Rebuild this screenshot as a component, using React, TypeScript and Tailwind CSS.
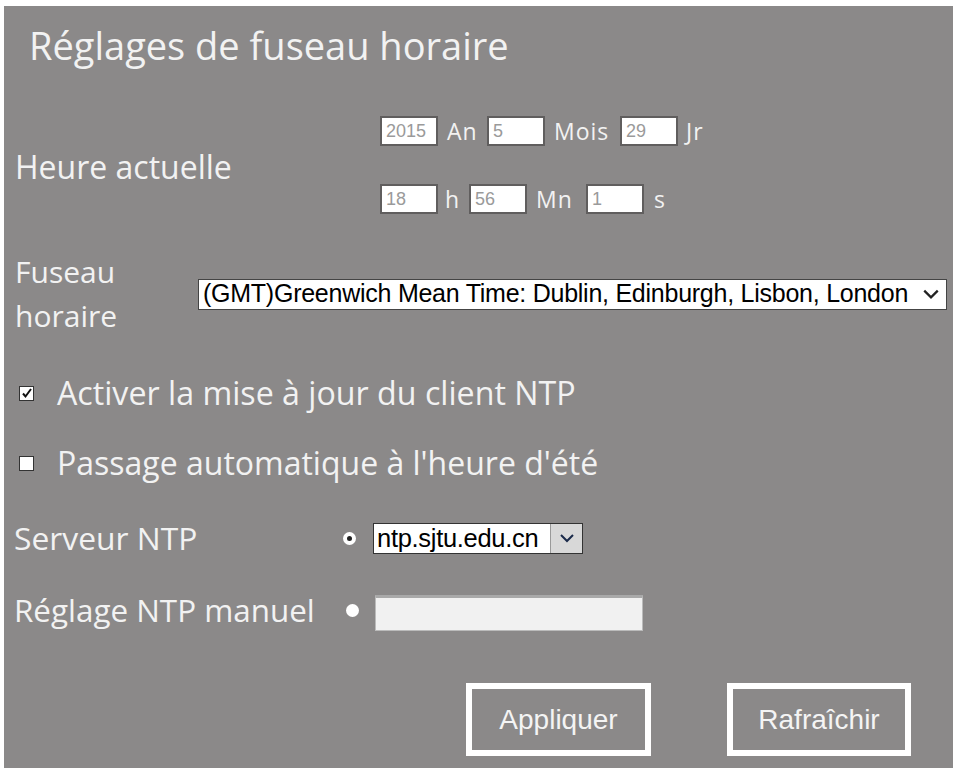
import React from "react";

const label = "font-['Open_Sans',_'Lato',_sans-serif] text-[#f2f2f2]";

// small white box used for the date / time fields
function NumBox({ value }: { value: string }) {
  return (
    <div className="flex h-[30px] w-[58px] items-center border-2 border-[#605e5e] bg-white pl-[4px] font-['Liberation_Sans',_sans-serif] text-[18px] text-[#9a9a9a]">
      {value}
    </div>
  );
}

function Unit({ children, w }: { children: React.ReactNode; w: string }) {
  return <span className={`${label} text-[23px] leading-none tracking-[1px] ${w} text-[#e4e4e4]`}>{children}</span>;
}

function Chevron({ className }: { className: string }) {
  return (
    <svg viewBox="0 0 16 12" className={className} fill="none" stroke="currentColor" strokeWidth="2">
      <path d="M2 3l6 6 6-6" />
    </svg>
  );
}

function Checkbox({ checked }: { checked: boolean }) {
  return (
    <div className="flex h-[15px] w-[15px] items-center justify-center border border-[#333] bg-white">
      {checked && (
        <svg viewBox="0 0 12 12" className="h-[12px] w-[12px]" fill="none" stroke="#111" strokeWidth="2">
          <path d="M2 6.5l2.5 3L10 2" />
        </svg>
      )}
    </div>
  );
}

function Radio({ checked }: { checked: boolean }) {
  return (
    <div className="flex h-[13px] w-[13px] items-center justify-center rounded-full bg-white">
      {checked && <div className="h-[5px] w-[5px] rounded-full bg-[#222]" />}
    </div>
  );
}

export default function App() {
  return (
    <div className="min-h-[773px] w-[960px] bg-white pl-[4px] pt-[6px]">
      <div className="flex h-[762px] w-[949px] flex-col bg-[#8b8989]">
        <div className={`${label} mt-[14px] flex h-[50px] items-center pl-[25px] text-[38px] leading-none`}>
          Réglages de fuseau horaire
        </div>

        {/* current date and time */}
        <div className="mt-[46px] flex items-center">
          <div className={`${label} w-[376px] pl-[11px] pt-[4px] text-[32px] leading-none`}>Heure actuelle</div>
          <div className="flex flex-col gap-[38px]">
            <div className="flex items-center">
              <NumBox value="2015" />
              <Unit w="w-[49px] pl-[9px]">An</Unit>
              <NumBox value="5" />
              <Unit w="w-[75px] pl-[9px]">Mois</Unit>
              <NumBox value="29" />
              <Unit w="pl-[8px]">Jr</Unit>
            </div>
            <div className="flex items-center">
              <NumBox value="18" />
              <Unit w="w-[31px] pl-[7px]">h</Unit>
              <NumBox value="56" />
              <Unit w="w-[59px] pl-[9px]">Mn</Unit>
              <NumBox value="1" />
              <Unit w="pl-[10px]">s</Unit>
            </div>
          </div>
        </div>

        {/* time zone */}
        <div className="mt-[36px] flex items-center">
          <div className={`${label} w-[194px] pl-[11px] text-[30px] leading-[44px]`}>
            Fuseau
            <br />
            horaire
          </div>
          <div className="flex h-[31px] w-[749px] items-center justify-between border border-[#444] bg-white pl-[4px] pr-[6px] font-['Liberation_Sans',_sans-serif] text-[25px] text-black">
            <span className="tracking-[-0.25px]">(GMT)Greenwich Mean Time: Dublin, Edinburgh, Lisbon, London</span>
            <Chevron className="h-[14px] w-[18px] text-[#222]" />
          </div>
        </div>

        <div className="mt-[35px] flex h-[40px] items-center pl-[15px]">
          <Checkbox checked />
          <span className={`${label} ml-[23px] text-[32.2px] leading-none`}>Activer la mise à jour du client NTP</span>
        </div>
        <div className="mt-[30px] flex h-[40px] items-center pl-[15px]">
          <Checkbox checked={false} />
          <span className={`${label} ml-[23px] text-[32px] leading-none`}>Passage automatique à l'heure d'été</span>
        </div>

        {/* NTP server */}
        <div className="mt-[37px] flex h-[36px] items-center">
          <div className={`${label} w-[339px] pl-[10px] text-[31.8px] leading-none`}>Serveur NTP</div>
          <Radio checked />
          <div className="ml-[17px] flex h-[31px] w-[210px] items-center border border-[#333] bg-white">
            <span className="flex-1 pl-[3px] font-['Liberation_Sans',_sans-serif] text-[25.5px] tracking-[-0.3px] text-black">
              ntp.sjtu.edu.cn
            </span>
            <div className="flex h-full w-[32px] items-center justify-center border-l border-[#999] bg-[#d8d8d8]">
              <Chevron className="h-[12px] w-[16px] text-[#1a2a4a]" />
            </div>
          </div>
        </div>
        <div className="mt-[36px] flex h-[36px] items-center">
          <div className={`${label} w-[342px] pl-[10px] text-[31.4px] leading-none`}>Réglage NTP manuel</div>
          <Radio checked={false} />
          <div className="ml-[16px] mt-[6px] h-[36px] w-[268px] border border-[#bbb] border-t-[3px] border-t-[#a9a9a9] bg-[#f1f1f1]" />
        </div>

        {/* actions */}
        <div className="mt-[55px] flex">
          <button className="ml-[462px] flex h-[73px] w-[185px] items-center justify-center border-[6px] border-white font-['Liberation_Sans',_sans-serif] text-[28px] text-[#f4f4f4]">
            Appliquer
          </button>
          <button className="ml-[76px] flex h-[73px] w-[184px] items-center justify-center border-[6px] border-white font-['Liberation_Sans',_sans-serif] text-[28px] text-[#f4f4f4]">
            Rafraîchir
          </button>
        </div>
      </div>
    </div>
  );
}
